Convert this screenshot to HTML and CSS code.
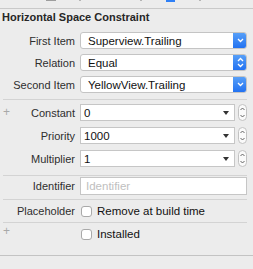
FILE: index.html
```html
<!DOCTYPE html>
<html>
<head>
    <meta charset="UTF-8">
    <title>Horizontal Space Constraint</title>
    <link rel="stylesheet" href="styles.css">
</head>
<body>

    <div class="toolbar">
        <span class="tb-icon tb-gray"></span>
        <span class="tb-tick tb-a"></span>
        <span class="tb-tick tb-b"></span>
        <span class="tb-icon tb-blue"></span>
        <span class="tb-tick tb-c"></span>
    </div>

    <h2 class="title">Horizontal Space Constraint</h2>

    <div class="group group-items">
        <div class="row">
            <label>First Item</label>
            <div class="popup">
                <span class="value">Superview.Trailing</span>
                <span class="popup-btn">
                    <svg width="7" height="5" viewBox="0 0 7 5"><path d="M1 1 L3.5 3.5 L6 1" fill="none" stroke="#fff" stroke-width="1.3"/></svg>
                </span>
            </div>
        </div>
        <div class="row">
            <label>Relation</label>
            <div class="popup">
                <span class="value">Equal</span>
                <span class="popup-btn">
                    <svg width="7" height="11" viewBox="0 0 7 11"><path d="M1 4 L3.5 1.5 L6 4 M1 7 L3.5 9.5 L6 7" fill="none" stroke="#fff" stroke-width="1.3"/></svg>
                </span>
            </div>
        </div>
        <div class="row">
            <label>Second Item</label>
            <div class="popup">
                <span class="value">YellowView.Trailing</span>
                <span class="popup-btn">
                    <svg width="7" height="5" viewBox="0 0 7 5"><path d="M1 1 L3.5 3.5 L6 1" fill="none" stroke="#fff" stroke-width="1.3"/></svg>
                </span>
            </div>
        </div>
    </div>

    <hr class="divider">

    <div class="group group-values">
        <div class="row">
            <span class="plus">+</span>
            <label>Constant</label>
            <div class="combo-wrap">
                <div class="combo"><span class="value">0</span><span class="caret"></span></div>
                <span class="stepper">
                    <svg width="9" height="17" viewBox="0 0 9 17"><path d="M2.5 6 L4.5 4 L6.5 6 M2.5 11 L4.5 13 L6.5 11" fill="none" stroke="#555" stroke-width="0.9"/></svg>
                </span>
            </div>
        </div>
        <div class="row">
            <label>Priority</label>
            <div class="combo-wrap">
                <div class="combo"><span class="value">1000</span><span class="caret"></span></div>
                <span class="stepper">
                    <svg width="9" height="17" viewBox="0 0 9 17"><path d="M2.5 6 L4.5 4 L6.5 6 M2.5 11 L4.5 13 L6.5 11" fill="none" stroke="#555" stroke-width="0.9"/></svg>
                </span>
            </div>
        </div>
        <div class="row">
            <label>Multiplier</label>
            <div class="combo-wrap">
                <div class="combo"><span class="value">1</span><span class="caret"></span></div>
                <span class="stepper">
                    <svg width="9" height="17" viewBox="0 0 9 17"><path d="M2.5 6 L4.5 4 L6.5 6 M2.5 11 L4.5 13 L6.5 11" fill="none" stroke="#555" stroke-width="0.9"/></svg>
                </span>
            </div>
        </div>
    </div>

    <hr class="divider">

    <div class="group group-ident">
        <div class="row">
            <label>Identifier</label>
            <input class="textfield" type="text" placeholder="Identifier">
        </div>
    </div>

    <hr class="divider">

    <div class="row check-row">
        <label>Placeholder</label>
        <div class="check"><span class="box"></span>Remove at build time</div>
    </div>

    <hr class="divider">

    <div class="row check-row">
        <span class="plus">+</span>
        <label></label>
        <div class="check"><span class="box"></span>Installed</div>
    </div>

    <div class="bottom-line"></div>

</body>
</html>
```

FILE: styles.css
```css
body {
    margin: 0;
    background-color: #ececec;
    font-family: "Liberation Sans", Arial, Helvetica, sans-serif;
    font-size: 11px;
    color: #2a2a2a;
}

.toolbar {
    position: relative;
    height: 8px;
    border-bottom: 1px solid #c9c9c9;
}

.tb-icon, .tb-tick {
    position: absolute;
    top: 0;
}

.tb-gray {
    left: 46px;
    width: 10px;
    height: 1px;
    background: #9d9d9d;
}

.tb-blue {
    left: 166px;
    width: 9px;
    height: 2px;
    background: #2f80f6;
}

.tb-tick {
    width: 2px;
    height: 1px;
    background: #b5b5b5;
}
.tb-a { left: 79px; }
.tb-b { left: 140px; }
.tb-c { left: 199px; }

.title {
    margin: 2px 0 0 2px;
    font-size: 11px;
    line-height: 13px;
    font-weight: bold;
    color: #262626;
}

.group {
    display: flex;
    flex-direction: column;
}

.group-items {
    padding: 8px 0 6px;
    gap: 5px;
}

.group-values {
    padding: 4px 0 8px;
    gap: 6px;
}

.group-ident {
    padding: 1px 0 5px;
}

.row {
    position: relative;
    display: grid;
    grid-template-columns: 80px 1fr;
    align-items: center;
    height: 17px;
    padding-right: 6px;
}

.row label {
    text-align: right;
    padding-right: 5px;
    color: #2e2e2e;
}

.plus {
    position: absolute;
    left: 3px;
    top: 1px;
    font-size: 12px;
    line-height: 14px;
    color: #a8a8a8;
}

.value {
    color: #111;
    font-size: 11.5px;
}

.popup {
    display: flex;
    align-items: center;
    height: 17px;
    box-sizing: border-box;
    background: #fff;
    border: 1px solid #c4c4c4;
    border-radius: 3px;
    overflow: hidden;
}

.popup .value {
    flex: 1;
    padding-left: 7px;
}

.popup-btn {
    display: flex;
    align-items: center;
    justify-content: center;
    width: 14px;
    height: 17px;
    margin-right: -1px;
    background: linear-gradient(#5aa2f8, #1f6ff1);
}

.combo-wrap {
    display: flex;
    align-items: center;
    gap: 3px;
}

.combo {
    flex: 1;
    display: flex;
    align-items: center;
    height: 17px;
    box-sizing: border-box;
    background: #fff;
    border: 1px solid #c6c6c6;
    padding: 0 5px 0 3px;
}

.combo .value {
    flex: 1;
}

.caret {
    width: 0;
    height: 0;
    border-left: 3px solid transparent;
    border-right: 3px solid transparent;
    border-top: 4px solid #333;
}

.stepper {
    display: block;
    width: 9px;
    height: 17px;
    box-sizing: border-box;
    border: 1px solid #c2c2c2;
    border-radius: 5px;
    background: #fafafa;
    overflow: hidden;
}

.stepper svg {
    display: block;
    margin: -1px;
}

.textfield {
    height: 18px;
    box-sizing: border-box;
    margin: 0;
    padding: 0 5px;
    border: 1px solid #c6c6c6;
    background: #fff;
    font-family: inherit;
    font-size: 11.5px;
    outline: none;
}

.textfield::placeholder {
    color: #c0c0c0;
}

.divider {
    margin: 0 6px 0 3px;
    border: 0;
    border-top: 1px solid #d3d3d3;
    height: 0;
}

.check-row {
    height: 22px;
}

.check {
    display: flex;
    align-items: center;
    gap: 5px;
    padding-left: 1px;
    color: #111;
    font-size: 11.5px;
}

.box {
    width: 11px;
    height: 11px;
    box-sizing: border-box;
    background: #fff;
    border: 1px solid #a9a9a9;
    border-radius: 3px;
}

.bottom-line {
    height: 10px;
    border-bottom: 1px solid #c3c3c3;
}
```
